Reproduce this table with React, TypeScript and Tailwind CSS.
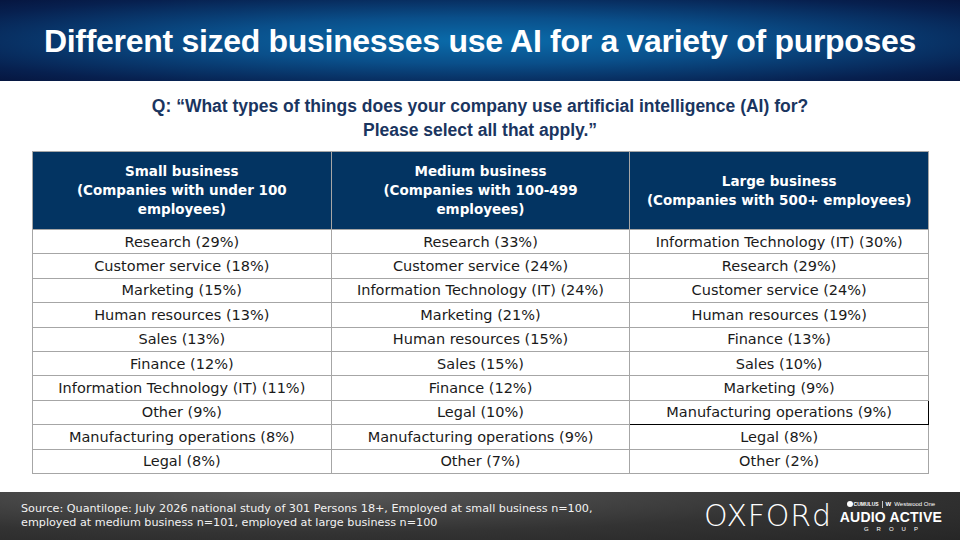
import React from "react";

const rows: [string, string, string][] = [
  ["Research (29%)", "Research (33%)", "Information Technology (IT) (30%)"],
  ["Customer service (18%)", "Customer service (24%)", "Research (29%)"],
  ["Marketing (15%)", "Information Technology (IT) (24%)", "Customer service (24%)"],
  ["Human resources (13%)", "Marketing (21%)", "Human resources (19%)"],
  ["Sales (13%)", "Human resources (15%)", "Finance (13%)"],
  ["Finance (12%)", "Sales (15%)", "Sales (10%)"],
  ["Information Technology (IT) (11%)", "Finance (12%)", "Marketing (9%)"],
  ["Other (9%)", "Legal (10%)", "Manufacturing operations (9%)"],
  ["Manufacturing operations (8%)", "Manufacturing operations (9%)", "Legal (8%)"],
  ["Legal (8%)", "Other (7%)", "Other (2%)"],
];

const heads = [
  ["Small business", "(Companies with under 100", "employees)"],
  ["Medium business", "(Companies with 100-499", "employees)"],
  ["Large business", "(Companies with 500+ employees)"],
];

export default function App() {
  return (
    <div className="w-[960px] h-[540px] bg-white flex flex-col overflow-hidden font-['Liberation_Sans',sans-serif]">
      <div className="h-[81px] shrink-0 flex items-center justify-center bg-[radial-gradient(ellipse_at_center,#0a6cab_0%,#0a4f8a_40%,#07204f_85%,#061640_100%)]">
        <h1 className="text-white font-bold text-[32px] tracking-[-0.3px] leading-none">
          Different sized businesses use AI for a variety of purposes
        </h1>
      </div>

      <div className="pt-[13px] h-[70px] text-center text-[#1a3560] font-bold text-[17.5px] leading-[24px]">
        <p>Q: “What types of things does your company use artificial intelligence (AI) for?</p>
        <p>Please select all that apply.”</p>
      </div>

      <div className="px-[32px] font-['DejaVu_Sans',sans-serif]">
        <table className="w-[897px] border-collapse text-[14.5px] text-[#1a1a1a]">
          <thead>
            <tr className="h-[78px] bg-[#033462]">
              {heads.map((h, i) => (
                <th key={i} className="w-[299px] border border-[#a6a6a6] text-white font-bold text-[13.5px] leading-[19px] align-middle px-1">
                  {h.map((l, j) => (
                    <div key={j}>{l}</div>
                  ))}
                </th>
              ))}
            </tr>
          </thead>
          <tbody>
            {rows.map((r, i) => (
              <tr key={i} className="h-[24.4px]">
                {r.map((c, j) => (
                  <td
                    key={j}
                    className={
                      i === 7 && j === 2
                        ? "border border-black text-center leading-[22px] p-0"
                        : "border border-[#a6a6a6] text-center leading-[22px] p-0"
                    }
                  >
                    {c}
                  </td>
                ))}
              </tr>
            ))}
          </tbody>
        </table>
      </div>

      <div className="mt-auto h-[48px] shrink-0 flex items-center justify-between pl-[21px] pr-[18px] bg-[radial-gradient(ellipse_at_30%_0%,#5a5a5a_0%,#333333_60%,#262626_100%)]">
        <p className="text-[#f2f2f2] font-['DejaVu_Sans',sans-serif] text-[11.2px] leading-[14px]">
          Source: Quantilope: July 2026 national study of 301 Persons 18+, Employed at small business n=100,
          <br />
          employed at medium business n=101, employed at large business n=100
        </p>
        <div className="flex items-center gap-[8px]">
          <span className="text-white font-['DejaVu_Sans',sans-serif] text-[30px] tracking-[0.8px] leading-none [font-weight:200]">
            OXFORd
          </span>
          <div className="flex flex-col items-center text-white leading-none">
            <div className="flex items-center gap-[3px] text-[6px]">
              <span className="flex items-center gap-[1px]">
                <span className="w-[6px] h-[6px] rounded-full bg-white inline-block" />
                <span className="font-bold text-[5px]">CUMULUS</span>
              </span>
              <span className="w-px h-[7px] bg-white/70" />
              <span className="font-bold">W</span>
              <span>Westwood One</span>
            </div>
            <div className="font-bold text-[14px] tracking-[0.2px] mt-[2px]">AUDIO ACTIVE</div>
            <div className="text-[6px] tracking-[8px] mt-[2px] pl-[8px]">GROUP</div>
          </div>
        </div>
      </div>
    </div>
  );
}
